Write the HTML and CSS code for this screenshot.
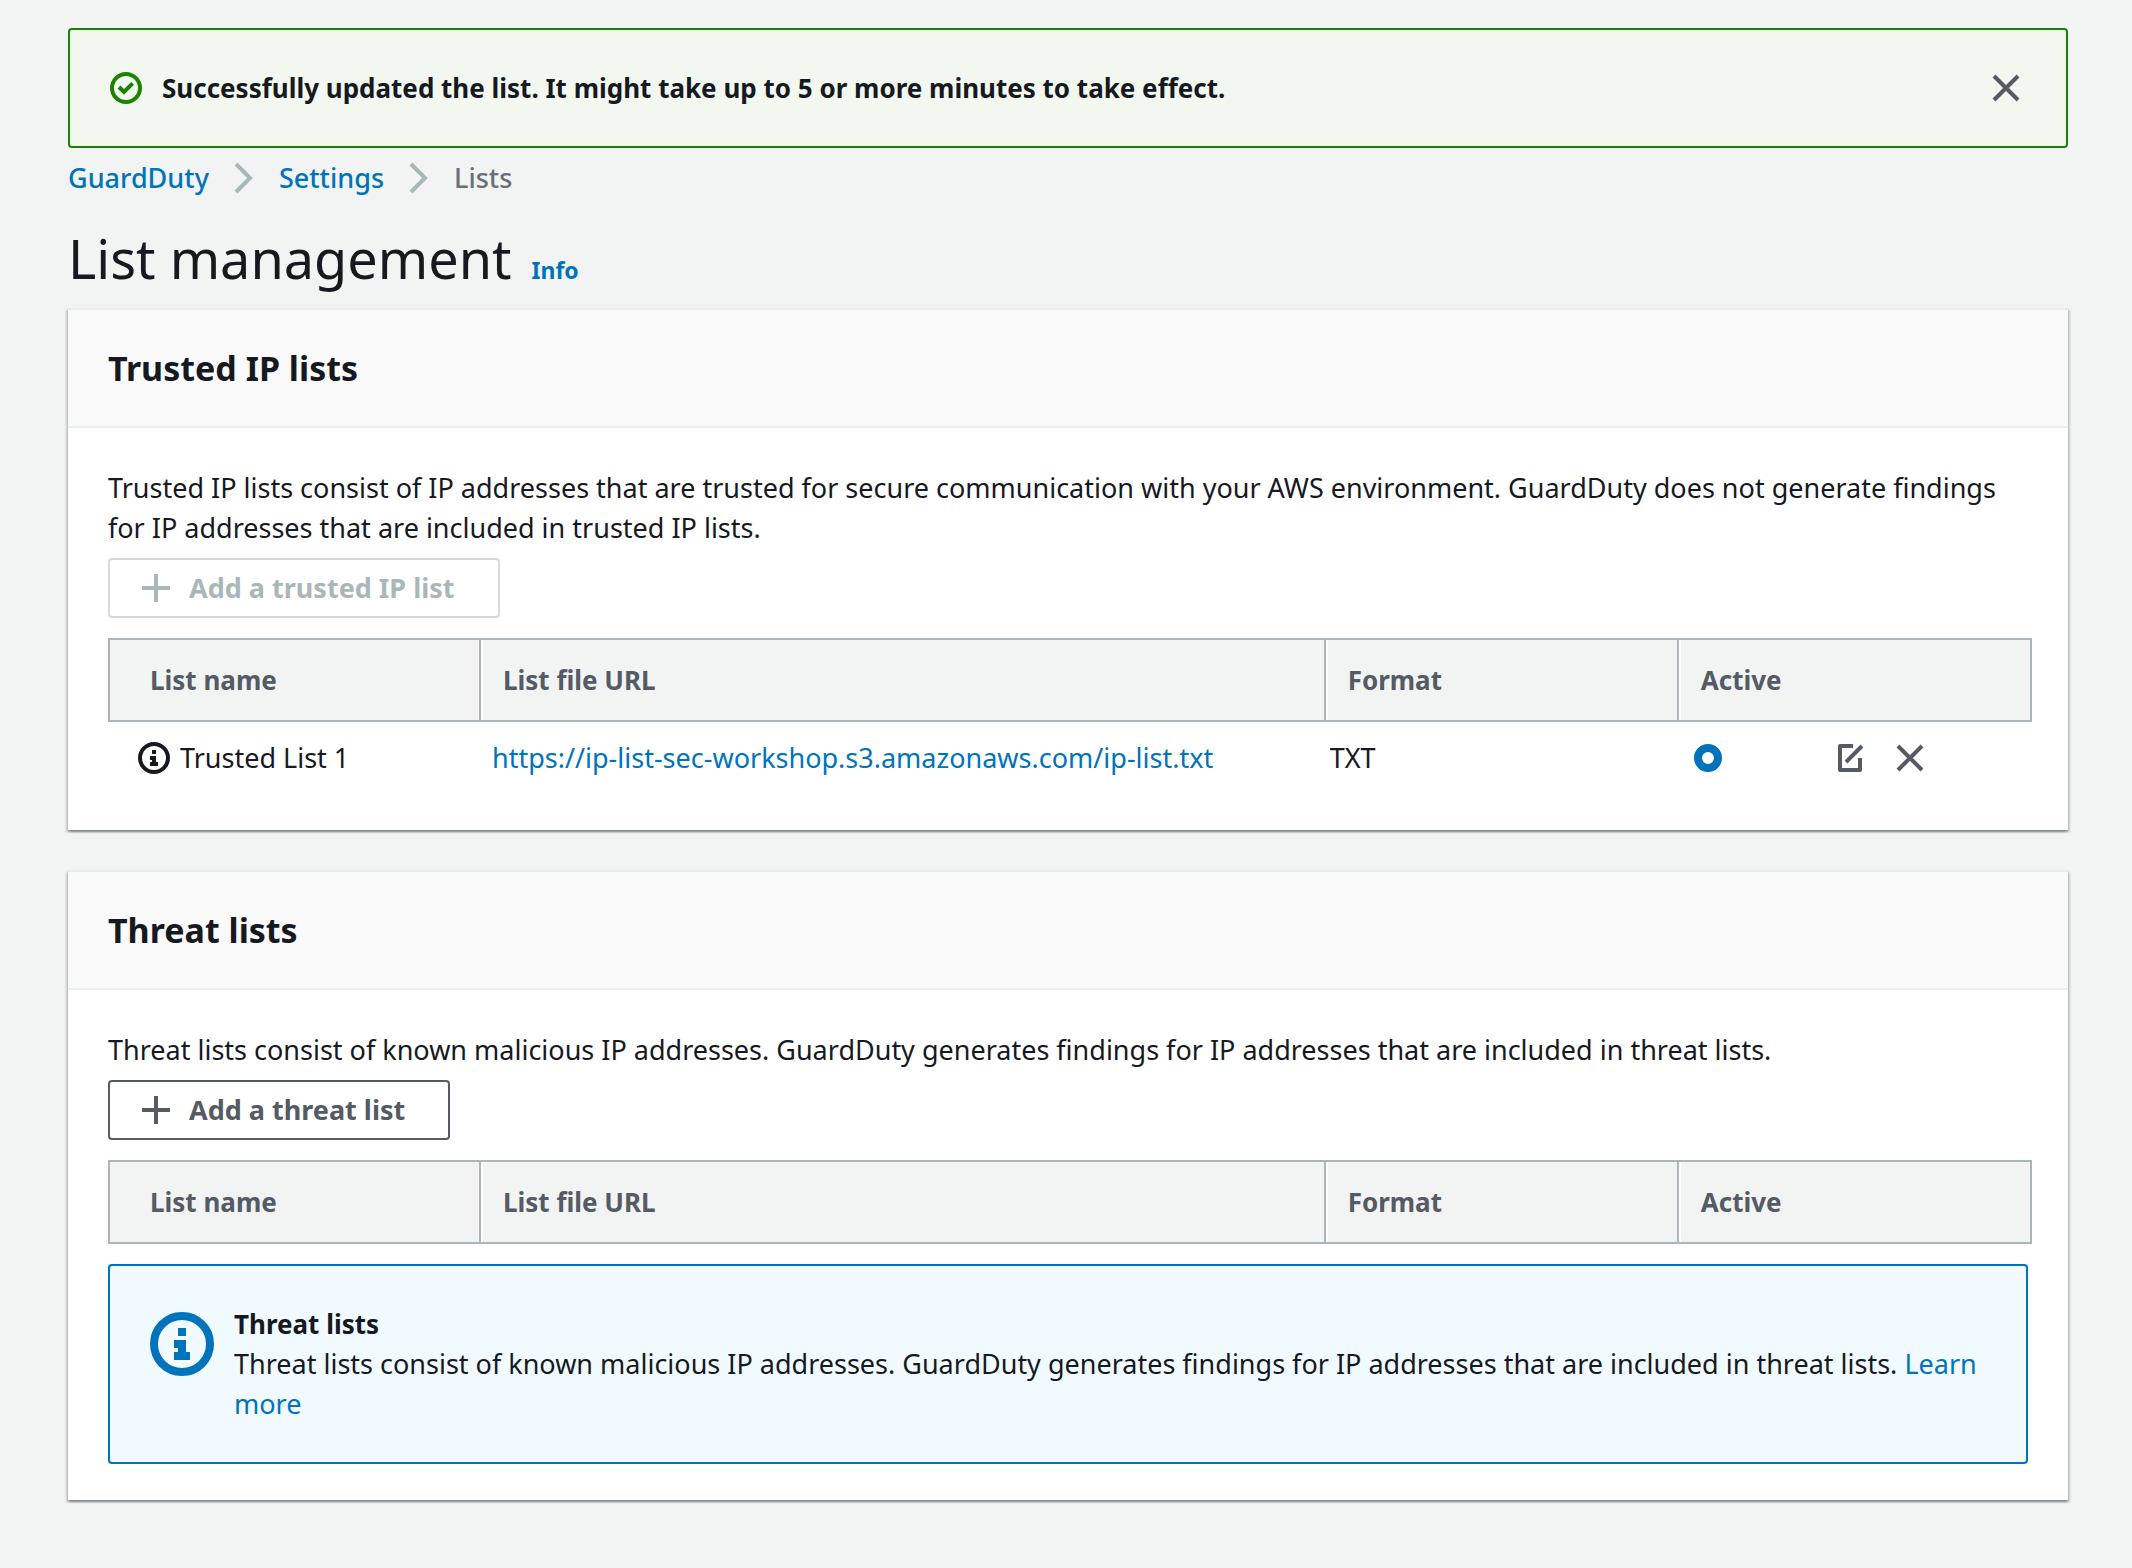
FILE: index.html
```html
<!DOCTYPE html>
<html lang="en">
<head>
<meta charset="utf-8">
<meta name="viewport" content="width=device-width, initial-scale=1">
<title>List management</title>
<link rel="stylesheet" href="styles.css">
</head>
<body>
<main class="page">
  <div class="flash" role="status">
    <svg class="icon" viewBox="0 0 16 16" aria-hidden="true"><circle cx="8" cy="8" r="7"/><path d="M4.5 7.5l2.5 2.5 4.3-4.3"/></svg>
    <p class="flash-text">Successfully updated the list. It might take up to 5 or more minutes to take effect.</p>
    <button class="icon-button" type="button" aria-label="Dismiss">
      <svg class="icon" viewBox="0 0 16 16" aria-hidden="true"><path d="M2 2l12 12M14 2L2 14"/></svg>
    </button>
  </div>

  <nav class="breadcrumbs" aria-label="Breadcrumbs">
    <a href="#guardduty">GuardDuty</a>
    <svg class="icon" viewBox="0 0 16 16" aria-hidden="true"><path d="M4 1l7 7-7 7"/></svg>
    <a href="#settings">Settings</a>
    <svg class="icon" viewBox="0 0 16 16" aria-hidden="true"><path d="M4 1l7 7-7 7"/></svg>
    <span class="current">Lists</span>
  </nav>

  <header class="title">
    <h1>List management</h1>
    <a class="info-link" href="#info">Info</a>
  </header>

  <section class="panel">
    <div class="panel-header"><h2>Trusted IP lists</h2></div>
    <div class="panel-body">
      <p>Trusted IP lists consist of IP addresses that are trusted for secure communication with your AWS environment. GuardDuty does not generate findings for IP addresses that are included in trusted IP lists.</p>
      <button class="button" type="button" disabled>
        <svg class="icon" viewBox="0 0 16 16" aria-hidden="true"><path d="M8 1v14M1 8h14"/></svg>
        Add a trusted IP list
      </button>
      <table class="lists">
        <colgroup><col class="col-name"><col class="col-url"><col class="col-format"><col class="col-active"></colgroup>
        <thead>
          <tr><th scope="col">List name</th><th scope="col">List file URL</th><th scope="col">Format</th><th scope="col">Active</th></tr>
        </thead>
        <tbody>
          <tr>
            <td>
              <div class="name">
                <svg class="icon" viewBox="0 0 16 16" aria-hidden="true"><circle cx="8" cy="8" r="7"/><path class="glyph" d="M7 4h2v2H7zM6 7h3v3h1v2H6v-2h1V9H6z"/></svg>
                <span>Trusted List 1</span>
              </div>
            </td>
            <td><a href="#ip-list">https://ip-list-sec-workshop.s3.amazonaws.com/ip-list.txt</a></td>
            <td>TXT</td>
            <td>
              <div class="actions">
                <input class="radio" type="radio" name="active-list" aria-label="Trusted List 1 active" checked>
                <button class="icon-button" type="button" aria-label="Edit">
                  <svg class="icon" viewBox="0 0 16 16" aria-hidden="true"><path d="M9.5 2H3v12h10V8M14 2L6 10" stroke-linejoin="round"/></svg>
                </button>
                <button class="icon-button" type="button" aria-label="Delete">
                  <svg class="icon" viewBox="0 0 16 16" aria-hidden="true"><path d="M2 2l12 12M14 2L2 14"/></svg>
                </button>
              </div>
            </td>
          </tr>
        </tbody>
      </table>
    </div>
  </section>

  <section class="panel">
    <div class="panel-header"><h2>Threat lists</h2></div>
    <div class="panel-body">
      <p>Threat lists consist of known malicious IP addresses. GuardDuty generates findings for IP addresses that are included in threat lists.</p>
      <button class="button" type="button">
        <svg class="icon" viewBox="0 0 16 16" aria-hidden="true"><path d="M8 1v14M1 8h14"/></svg>
        Add a threat list
      </button>
      <table class="lists">
        <colgroup><col class="col-name"><col class="col-url"><col class="col-format"><col class="col-active"></colgroup>
        <thead>
          <tr><th scope="col">List name</th><th scope="col">List file URL</th><th scope="col">Format</th><th scope="col">Active</th></tr>
        </thead>
      </table>
      <div class="callout">
        <svg class="icon icon-large" viewBox="0 0 16 16" aria-hidden="true"><circle cx="8" cy="8" r="7"/><path class="glyph" d="M7 4h2v2H7zM6 7h3v3h1v2H6v-2h1V9H6z"/></svg>
        <div>
          <h3>Threat lists</h3>
          <p>Threat lists consist of known malicious IP addresses. GuardDuty generates findings for IP addresses that are included in threat lists. <a href="#learn-more">Learn more</a></p>
        </div>
      </div>
    </div>
  </section>
</main>
</body>
</html>
```
FILE: styles.css
```css
* {
  box-sizing: border-box;
}

body {
  margin: 0;
  background: #f2f3f3;
  color: #16191f;
  font: 400 27px/40px "Noto Sans", "Open Sans", sans-serif;
}

h1, h2, h3, p {
  margin: 0;
}

a {
  color: #0073bb;
  text-decoration: none;
}

.page {
  padding: 28px 64px 68px 68px;
}

.icon {
  flex: none;
  width: 32px;
  height: 32px;
  fill: none;
  stroke: currentColor;
  stroke-width: 2;
}

.icon-large {
  width: 64px;
  height: 64px;
}

.glyph {
  fill: currentColor;
  stroke: none;
}

.icon-button {
  display: flex;
  padding: 0;
  border: 0;
  background: none;
  color: #545b64;
}

/* Success message */
.flash {
  display: flex;
  align-items: center;
  gap: 20px;
  padding: 38px 44px 38px 40px;
  border: 2px solid #1d8102;
  border-radius: 4px;
  background: #f2f8f0;
  color: #1d8102;
}

.flash-text {
  flex: 1;
  color: #16191f;
  font-size: 26px;
  font-weight: 700;
}

.breadcrumbs {
  display: flex;
  align-items: center;
  gap: 19px;
  padding-top: 10px;
  font-weight: 500;
}

.breadcrumbs .icon {
  color: #aab7b8;
}

.current {
  color: #687078;
}

.title {
  display: flex;
  align-items: baseline;
  gap: 20px;
  padding: 24px 0 14px;
}

h1 {
  font-size: 54px;
  font-weight: 400;
  line-height: 72px;
}

.info-link {
  font-size: 23px;
  font-weight: 700;
}

/* Panels */
.panel {
  border-top: 2px solid #eaeded;
  background: #fff;
  box-shadow: 0 2px 2px rgba(0, 28, 36, 0.3), 2px 2px 2px rgba(0, 28, 36, 0.15), -2px 2px 2px rgba(0, 28, 36, 0.15);
}

.panel + .panel {
  margin-top: 40px;
}

.panel-header {
  padding: 34px 40px;
  border-bottom: 2px solid #eaeded;
  background: #fafafa;
}

h2 {
  font-size: 34px;
  line-height: 48px;
}

.panel-body {
  padding: 40px 40px 36px;
}

.button {
  display: flex;
  align-items: center;
  gap: 17px;
  margin: 10px 0 20px;
  padding: 8px 43px 8px 30px;
  border: 2px solid #545b64;
  border-radius: 4px;
  background: #fff;
  color: #545b64;
  font: inherit;
  font-weight: 700;
}

.button:disabled {
  border-color: #d5dbdb;
  color: #aab7b8;
}

/* Tables run slightly past the text column */
.lists {
  width: calc(100% + 4px);
  border-spacing: 0;
  table-layout: fixed;
}

.col-name {
  width: 373px;
}

.col-url {
  width: 43.9%;
}

th {
  padding: 20px;
  border: 2px solid #aab7b8;
  background: #f2f3f3;
  color: #545b64;
  font-size: 26px;
  text-align: left;
}

th:first-child {
  padding-left: 40px;
}

th:not(:first-child) {
  border-left: 0;
  padding-left: 22px;
  box-shadow: inset 2px 0 #fff;
}

td {
  padding: 16px 4px 16px 11px;
}

td:nth-child(3) {
  padding-left: 4px;
}

.name {
  display: flex;
  align-items: center;
  gap: 10px;
  padding-left: 19px;
}

.actions {
  display: flex;
  align-items: center;
  gap: 28px;
  padding-left: 4px;
}

.radio {
  width: 28px;
  height: 28px;
  margin: 0 84px 0 0;
  border: 8px solid #0073bb;
  border-radius: 50%;
  background: #fff;
  appearance: none;
}

.callout {
  display: flex;
  gap: 20px;
  margin-top: 20px;
  padding: 38px 40px;
  border: 2px solid #0073bb;
  border-radius: 4px;
  background: #f1faff;
}

.callout .icon {
  margin-top: 8px;
  color: #0073bb;
}

h3 {
  font-size: 26px;
}
```
